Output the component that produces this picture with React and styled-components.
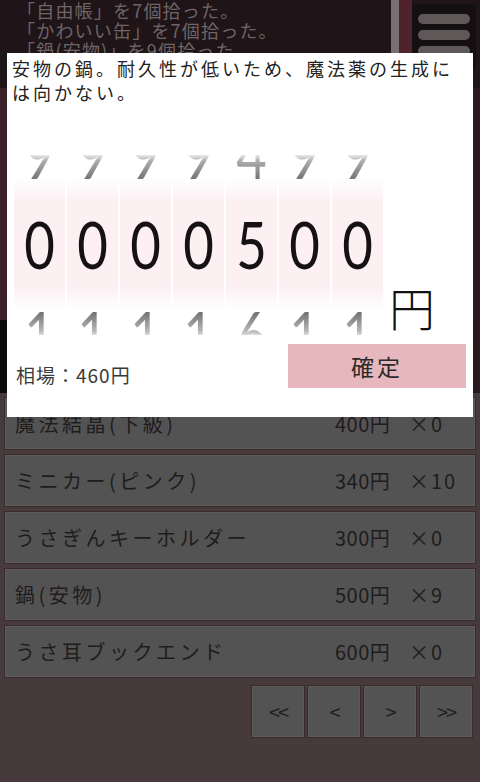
import React from 'react'
import styled, { createGlobalStyle } from 'styled-components'

const JP = `"Noto Sans CJK JP", "Noto Sans", sans-serif`;

const LOG = [
  '「ぬいぐるみ」を3個拾った。',
  '「自由帳」を7個拾った。',
  '「かわいい缶」を7個拾った。',
  '「鍋(安物)」を9個拾った。',
];

const ITEMS = [
  { name: '魔法結晶(下級)', price: 400, count: 0 },
  { name: 'ミニカー(ピンク)', price: 340, count: 10 },
  { name: 'うさぎんキーホルダー', price: 300, count: 0 },
  { name: '鍋(安物)', price: 500, count: 9 },
  { name: 'うさ耳ブックエンド', price: 600, count: 0 },
];

const DIGITS = [0, 0, 0, 0, 5, 0, 0];

function Reel({ value }) {
  const prev = (value + 9) % 10;
  const next = (value + 1) % 10;
  return (
    <ReelWindow>
      <ReelStrip>
        <ReelCell>{prev}</ReelCell>
        <ReelCell>{value}</ReelCell>
        <ReelCell>{next}</ReelCell>
      </ReelStrip>
    </ReelWindow>
  );
}

function PriceModal() {
  return (
    <Modal>
      <Description>安物の鍋。耐久性が低いため、魔法薬の生成には向かない。</Description>
      <ReelRow>
        {DIGITS.map((d, i) => <Reel key={i} value={d} />)}
        <Yen>円</Yen>
      </ReelRow>
      <ModalFooter>
        <MarketPrice>相場：460円</MarketPrice>
        <ConfirmButton type="button">確定</ConfirmButton>
      </ModalFooter>
    </Modal>
  );
}

function App() {
  return (
    <>
      <GlobalStyle />
      <Screen>
        <TopArea>
          <Log>
            {LOG.map((line, i) => <LogLine key={i}>{line}</LogLine>)}
          </Log>
          <Picture />
          <BlackStrip />
          <MenuButton>
            <MenuBar />
            <MenuBar />
            <MenuBar />
          </MenuButton>
        </TopArea>
        <List>
          {ITEMS.map((item) => (
            <ItemRow key={item.name}>
              <ItemName>{item.name}</ItemName>
              <ItemPrice>{item.price}円</ItemPrice>
              <ItemCount>×{item.count}</ItemCount>
            </ItemRow>
          ))}
        </List>
        <Pager>
          <PageButton>{'<<'}</PageButton>
          <PageButton>{'<'}</PageButton>
          <PageButton>{'>'}</PageButton>
          <PageButton>{'>>'}</PageButton>
        </Pager>
        <PriceModal />
      </Screen>
    </>
  );
}

const GlobalStyle = createGlobalStyle`
  html, body {
    margin: 0;
    padding: 0;
    background: #463a3d;
  }
  * {
    box-sizing: border-box;
  }
`;

const Screen = styled.div`
  position: relative;
  width: 480px;
  height: 782px;
  overflow: hidden;
  background: #463a3d;
  font-family: ${JP};
`;

const TopArea = styled.div`
  position: relative;
  height: 393px;
  display: flex;
  flex-direction: column;
  background: #22161a;
`;

const Log = styled.div`
  height: 88px;
  padding: 0 0 0 17px;
  display: flex;
  flex-direction: column;
  justify-content: flex-end;
  overflow: hidden;
  background:
    linear-gradient(90deg, transparent 391px, #7a7073 391px, #7a7073 399px, #4e232b 399px, #4e232b 412px, transparent 412px),
    #1f1417;
`;

const LogLine = styled.div`
  font-size: 18px;
  line-height: 20px;
  color: #6f6567;
  white-space: nowrap;
  letter-spacing: 1.2px;
  &:last-child {
    margin-bottom: 28px;
  }
`;

const Picture = styled.div`
  height: 232px;
  background: linear-gradient(90deg, #3c2027 0%, #341c22 60%, #2a191d 100%);
`;

const BlackStrip = styled.div`
  flex: 1;
  background: linear-gradient(90deg, #0c0a0b 0%, #0f0b0c 85%, #2a1a1e 100%);
`;

const MenuButton = styled.div`
  position: absolute;
  top: 4px;
  right: 4px;
  width: 64px;
  height: 66px;
  padding: 10px 6px;
  border-radius: 4px;
  background: #141012;
  display: flex;
  flex-direction: column;
  gap: 6px;
`;

const MenuBar = styled.div`
  height: 10px;
  border-radius: 5px;
  background: #5e5859;
`;

const List = styled.div`
  padding: 4px 4px 0;
  display: flex;
  flex-direction: column;
  gap: 4px;
`;

const ItemRow = styled.div`
  height: 53px;
  display: grid;
  grid-template-columns: 1fr 74px 66px;
  align-items: center;
  padding-left: 10px;
  background: #545353;
  border: 1px solid #3a2a2e;
  box-shadow: inset 0 0 0 1px #5e5b5b;
  color: #1e1c1c;
  font-size: 20px;
`;

const ItemName = styled.span`
  letter-spacing: 3.5px;
  white-space: nowrap;
`;

const ItemPrice = styled.span`
  white-space: nowrap;
  letter-spacing: 0.5px;
`;

const ItemCount = styled.span`
  white-space: nowrap;
  letter-spacing: 2px;
`;

const Pager = styled.div`
  margin-top: 7px;
  padding-right: 7px;
  display: flex;
  justify-content: flex-end;
  gap: 2px;
`;

const PageButton = styled.button`
  width: 54px;
  height: 53px;
  padding: 0;
  background: #545353;
  border: 1px solid #3a2a2e;
  box-shadow: inset 0 0 0 1px #5e5b5b;
  color: #1e1c1c;
  font-family: ${JP};
  font-size: 20px;
  letter-spacing: -2px;
`;

const Modal = styled.div`
  position: absolute;
  top: 53px;
  left: 7px;
  width: 466px;
  height: 364px;
  padding: 3px 7px 0;
  background: #ffffff;
  display: flex;
  flex-direction: column;
`;

const Description = styled.p`
  margin: 0 0 0 -2px;
  height: 48px;
  font-size: 18px;
  line-height: 24px;
  color: #222;
  letter-spacing: 3px;
`;

const ReelRow = styled.div`
  margin-top: 51px;
  height: 180px;
  display: flex;
  gap: 2px;
`;

const ReelWindow = styled.div`
  position: relative;
  width: 51px;
  height: 180px;
  overflow: hidden;
  &::before {
    content: '';
    position: absolute;
    left: 0;
    right: 0;
    top: 22px;
    height: 134px;
    background: linear-gradient(180deg, rgba(252, 236, 240, 0) 0%, #fcf0f3 18%, #fcf0f3 82%, rgba(252, 236, 240, 0) 100%);
  }
`;

const ReelStrip = styled.div`
  position: relative;
  margin-top: -46px;
  display: flex;
  flex-direction: column;
  -webkit-mask-image: linear-gradient(180deg, transparent 44px, rgba(0, 0, 0, 0.35) 52px, rgba(0, 0, 0, 0.65) 75px, #000 100px, #000 170px, rgba(0, 0, 0, 0.65) 200px, rgba(0, 0, 0, 0.3) 222px, transparent 230px);
  mask-image: linear-gradient(180deg, transparent 44px, rgba(0, 0, 0, 0.35) 52px, rgba(0, 0, 0, 0.65) 75px, #000 100px, #000 170px, rgba(0, 0, 0, 0.65) 200px, rgba(0, 0, 0, 0.3) 222px, transparent 230px);
`;

const ReelCell = styled.div`
  height: 90px;
  line-height: 90px;
  text-align: center;
  font-family: Lato, "Noto Sans", sans-serif;
  font-weight: 400;
  font-size: 66px;
  color: #161214;
  transform: scaleX(0.8);
`;

const Yen = styled.span`
  align-self: flex-end;
  margin-left: 4px;
  margin-bottom: 4px;
  font-size: 46px;
  line-height: 50px;
  color: #111;
  font-weight: 300;
`;

const ModalFooter = styled.div`
  margin-top: 9px;
  display: flex;
  justify-content: space-between;
  align-items: flex-end;
`;

const MarketPrice = styled.span`
  margin: 0 0 1px 2px;
  font-size: 19px;
  line-height: 24px;
  letter-spacing: 1px;
  color: #3a3a3a;
`;

const ConfirmButton = styled.button`
  width: 178px;
  height: 44px;
  margin-right: 0;
  border: none;
  background: #e6b8bd;
  color: #2a2a2a;
  font-family: ${JP};
  font-size: 23px;
  letter-spacing: 3px;
`;

export default App
